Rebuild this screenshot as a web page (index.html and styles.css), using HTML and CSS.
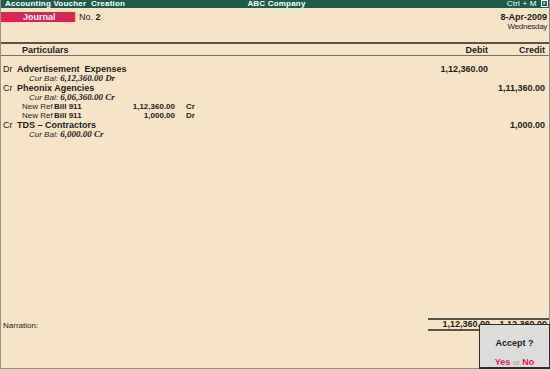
FILE: index.html
```html
<!DOCTYPE html>
<html>
<head>
<meta charset="utf-8">
<link rel="stylesheet" href="styles.css">
</head>
<body>
<div class="window">
  <div class="titlebar">
    <span class="t-left">Accounting Voucher&nbsp; Creation</span>
    <span class="t-mid">ABC Company</span>
    <span class="t-right">Ctrl + M <span class="closebox">&#x2715;</span></span>
  </div>
  <div class="head">
    <div class="head-left">
      <span class="vtype">Journal</span>
      <span class="vno">No. <b>2</b></span>
    </div>
    <div class="head-right">
      <div class="date">8-Apr-2009</div>
      <div class="day">Wednesday</div>
    </div>
  </div>
  <div class="colhead">
    <span class="ch-part">Particulars</span>
    <span class="ch-dr">Debit</span>
    <span class="ch-cr">Credit</span>
  </div>
  <div class="entries">
    <div class="row">
      <span class="part"><span class="drcr">Dr</span><b class="ledger">Advertisement&nbsp; Expenses</b></span>
      <span class="dr">1,12,360.00</span><span class="cr"></span>
    </div>
    <div class="row"><span class="bal">Cur Bal: <b>6,12,360.00 Dr</b></span></div>
    <div class="row">
      <span class="part"><span class="drcr">Cr</span><b class="ledger">Pheonix Agencies</b></span>
      <span class="dr"></span><span class="cr">1,11,360.00</span>
    </div>
    <div class="row"><span class="bal">Cur Bal: <b>6,06,360.00 Cr</b></span></div>
    <div class="row ref"><span class="rt">New Ref</span><b class="rn">Bill 911</b><b class="ra">1,12,360.00</b><b class="rs">Cr</b></div>
    <div class="row ref"><span class="rt">New Ref</span><b class="rn">Bill 911</b><b class="ra">1,000.00</b><b class="rs">Dr</b></div>
    <div class="row">
      <span class="part"><span class="drcr">Cr</span><b class="ledger">TDS &ndash; Contractors</b></span>
      <span class="dr"></span><span class="cr">1,000.00</span>
    </div>
    <div class="row"><span class="bal">Cur Bal: <b>6,000.00 Cr</b></span></div>
  </div>
  <div class="foot">
    <span class="narr">Narration:</span>
    <div class="totals">
      <span class="tdr">1,12,360.00</span>
      <span class="tcr">1,12,360.00</span>
    </div>
  </div>
  <div class="dialog">
    <div class="q">Accept ?</div>
    <div class="yn"><span class="hl">Yes</span> <span class="or">or</span> <span class="hl">No</span></div>
  </div>
</div>
</body>
</html>
```

FILE: styles.css
```css
* { box-sizing: border-box; }
html, body { margin: 0; padding: 0; }
body {
  width: 550px;
  height: 369px;
  background: #f7e4c7;
  font-family: "Liberation Sans", Arial, sans-serif;
  font-size: 9px;
  color: #1c1c1c;
  overflow: hidden;
}
.window {
  position: relative;
  width: 550px;
  height: 369px;
  border-left: 1px solid #9a9080;
  border-right: 1px solid #9a9080;
  border-bottom: 1px solid #9a9080;
  display: flex;
  flex-direction: column;
}
.titlebar {
  height: 8px;
  background: #1d5b4b;
  color: #ffffff;
  font-weight: bold;
  font-size: 8px;
  line-height: 8px;
  display: flex;
  justify-content: space-between;
  align-items: center;
  padding: 0 1px 0 4px;
  letter-spacing: 0.2px;
}
.t-left, .t-right { flex: 1; }
.t-right { text-align: right; font-weight: normal; }
.closebox {
  display: inline-block;
  width: 7px;
  height: 7px;
  border: 1px solid #fff;
  font-size: 5px;
  line-height: 5px;
  text-align: center;
  vertical-align: top;
  margin-left: 2px;
}
.head {
  height: 35px;
  display: flex;
  justify-content: space-between;
  padding: 4px 2px 0 0;
}
.head-left { display: flex; align-items: flex-start; gap: 3px; }
.vtype {
  display: block;
  width: 75px;
  height: 10px;
  background: #db2450;
  color: #fff;
  font-weight: bold;
  font-size: 9px;
  line-height: 10px;
  padding-left: 22px;
  border-right: 1px solid #f2b6b8;
}
.vno { font-size: 9px; line-height: 10px; }
.head-right { text-align: right; padding-top: 0; }
.date { font-weight: bold; font-size: 9px; line-height: 10px; }
.day { font-size: 8px; line-height: 10px; letter-spacing: -0.3px; }
.colhead {
  margin-top: -1px;
  border-top: 2px solid #5a5448;
  border-bottom: 1px solid #7a7060;
  height: 14px;
  display: grid;
  grid-template-columns: 1fr 62px 57px;
  padding-right: 4px;
  padding-top: 1px;
  font-weight: bold;
  font-size: 9px;
  line-height: 10px;
}
.ch-part { padding-left: 21px; }
.ch-dr, .ch-cr { text-align: right; }
.entries {
  flex: 1;
  padding-top: 9px;
}
.row {
  display: grid;
  grid-template-columns: 1fr 62px 57px;
  padding-right: 4px;
  height: 9.3px;
  line-height: 9.3px;
  white-space: nowrap;
}
.row b, .dr, .cr, .ra { font-weight: bold; }
.drcr { display: inline-block; width: 16px; padding-left: 2px; }
.dr, .cr { text-align: right; }
.bal {
  grid-column: 1 / -1;
  padding-left: 28px;
  font-style: italic;
  font-size: 8px;
}
.bal b { font-family: "Liberation Serif", "Times New Roman", serif; font-size: 9px; }
.row.ref {
  grid-template-columns: 32px 60px 61px 24px;
  padding-left: 21px;
  font-size: 8px;
}
.rn { font-size: 8px; }
.ra { text-align: right; }
.rs { padding-left: 11px; }
.foot {
  height: 51px;
  display: flex;
  justify-content: space-between;
  align-items: flex-start;
}
.narr { font-size: 8px; padding-top: 4px; padding-left: 2px; }
.totals {
  width: 121px;
  display: grid;
  grid-template-columns: 62px 57px;
  border-top: 2px solid #5a5448;
  border-bottom: 2px solid #5a5448;
  height: 13px;
  margin-top: 1px;
  font-weight: bold;
  line-height: 9px;
  padding-right: 4px;
}
.tdr, .tcr { text-align: right; }
.dialog {
  position: absolute;
  left: 478px;
  top: 324px;
  width: 72px;
  height: 45px;
  background: #dcdcda;
  border: 1px solid #2e2e2e;
  border-right-width: 2px;
  border-bottom-width: 2px;
  text-align: center;
  font-weight: bold;
  font-size: 9px;
}
.q { padding-top: 13px; line-height: 10px; }
.yn { padding-top: 9px; line-height: 10px; }
.hl { color: #e3185a; }
.or { color: #a0a0a0; font-weight: normal; font-size: 8px; }
```
